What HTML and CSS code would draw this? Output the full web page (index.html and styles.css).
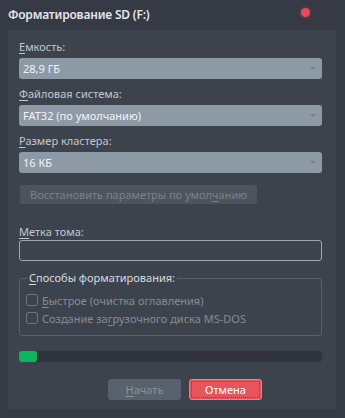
FILE: index.html
```html
<!DOCTYPE html>
<html lang="ru">
<head>
    <meta charset="UTF-8">
    <meta name="viewport" content="width=device-width, initial-scale=1.0">
    <title>Форматирование SD (F:)</title>
    <link rel="stylesheet" href="styles.css">
</head>
<body>
    <div class="title-bar">
        <span class="title">Форматирование SD (F:)</span>
        <span class="close-dot"></span>
    </div>
    <div class="panel">
        <div class="field">
            <label class="form-label"><u>Е</u>мкость:</label>
            <div class="select-box">28,9 ГБ<span class="arrow"></span></div>
        </div>
        <div class="field">
            <label class="form-label"><u>Ф</u>айловая система:</label>
            <div class="select-box">FAT32 (по умолчанию)<span class="arrow"></span></div>
        </div>
        <div class="field">
            <label class="form-label"><u>Р</u>азмер кластера:</label>
            <div class="select-box">16 КБ<span class="arrow"></span></div>
        </div>
        <button type="button" class="restore-button">Восстановить параметры по умол<u>ч</u>анию</button>
        <div class="field label-field">
            <label class="form-label"><u>М</u>етка тома:</label>
            <div class="input-field"></div>
        </div>
        <fieldset class="options">
            <legend><u>С</u>пособы форматирования:</legend>
            <div class="check-row"><span class="check"></span><u>Б</u>ыстрое (очистка оглавления)</div>
            <div class="check-row"><span class="check"></span>Создание за<u>г</u>рузочного диска MS-DOS</div>
        </fieldset>
        <div class="progress"><div class="progress-fill" style="width: 18px"></div></div>
        <div class="button-container">
            <button type="button" class="start-button"><u>Н</u>ачать</button>
            <button type="button" class="cancel-button"><span>Отмена</span></button>
        </div>
    </div>
</body>
</html>
```

FILE: styles.css
```css
body {
    margin: 0;
    width: 345px;
    height: 418px;
    background-color: #353a44;
    font-family: "Noto Sans", "Open Sans", sans-serif;
    font-size: 11px;
    color: #c9ced6;
    overflow: hidden;
}
.title-bar {
    height: 30px;
    display: flex;
    align-items: center;
    padding: 0 8px;
    position: relative;
}
.title {
    font-size: 12px;
    font-weight: 600;
    color: #e4e7ec;
    margin-top: -1px;
    letter-spacing: -0.2px;
}
.close-dot {
    position: absolute;
    left: 301px;
    top: 8px;
    width: 9px;
    height: 9px;
    border-radius: 50%;
    background-color: #e84a5b;
    box-shadow: 0 0 4px rgba(232, 74, 91, 0.5);
}
.panel {
    margin: 0 9px 0 8px;
    height: 379px;
    box-sizing: border-box;
    background-color: #3d434d;
    padding: 9px 14px 9px 11px;
    display: flex;
    flex-direction: column;
}
.field {
    display: flex;
    flex-direction: column;
    margin-bottom: 7px;
}
.form-label {
    height: 16px;
    line-height: 16px;
    margin-bottom: 3px;
    color: #c3c8d0;
}
.select-box {
    height: 21px;
    line-height: 21px;
    border-radius: 3px;
    background-color: #8e99a6;
    color: #f2f4f7;
    padding-left: 4px;
    position: relative;
}
.arrow {
    position: absolute;
    right: 6px;
    top: 9px;
    border-left: 3px solid transparent;
    border-right: 3px solid transparent;
    border-top: 3px solid #76808c;
}
.restore-button {
    margin: 5px 0 0 1px;
    width: 237px;
    height: 20px;
    border: none;
    border-radius: 3px;
    background-color: #4d545e;
    color: #7b828c;
    font-family: inherit;
    font-size: 11px;
    padding: 0;
}
.label-field {
    margin-top: 20px;
}
.label-field .form-label {
    margin-bottom: 0;
}
.input-field {
    height: 21px;
    box-sizing: border-box;
    border: 1px solid #a0a6ae;
    border-radius: 3px;
}
.options {
    margin: 3px 0 0 0;
    padding: 6px 0 8px 6px;
    height: 65px;
    box-sizing: border-box;
    border: 1px solid #59606a;
    border-radius: 3px;
}
.options legend {
    padding: 0 2px;
    margin-left: 1px;
    color: #d7dbe1;
    line-height: 14px;
}
.check-row {
    display: flex;
    align-items: center;
    height: 18px;
    color: #858c96;
}
.check {
    width: 10px;
    height: 10px;
    border: 1px solid #6d747e;
    border-radius: 2px;
    margin-right: 4px;
}
.progress {
    margin-top: 15px;
    height: 11px;
    border-radius: 3px;
    background-color: #30353d;
}
.progress-fill {
    height: 100%;
    border-radius: 3px;
    background-color: #10b45f;
}
.button-container {
    display: flex;
    margin: 17px 0 0 89px;
}
.start-button,
.cancel-button {
    width: 73px;
    height: 21px;
    border-radius: 3px;
    font-family: inherit;
    font-size: 11px;
    padding: 0;
}
.start-button {
    border: none;
    background-color: #59616c;
    color: #8a919b;
}
.cancel-button {
    margin-left: 8px;
    border: 1px solid #f07d83;
    background-color: #e8545b;
    color: #ffffff;
    padding: 1px;
}
.cancel-button span {
    display: block;
    height: 100%;
    box-sizing: border-box;
    border: 1px dotted #a3323a;
    line-height: 15px;
}
u {
    text-decoration-thickness: 1px;
    text-underline-offset: 2px;
}
```
